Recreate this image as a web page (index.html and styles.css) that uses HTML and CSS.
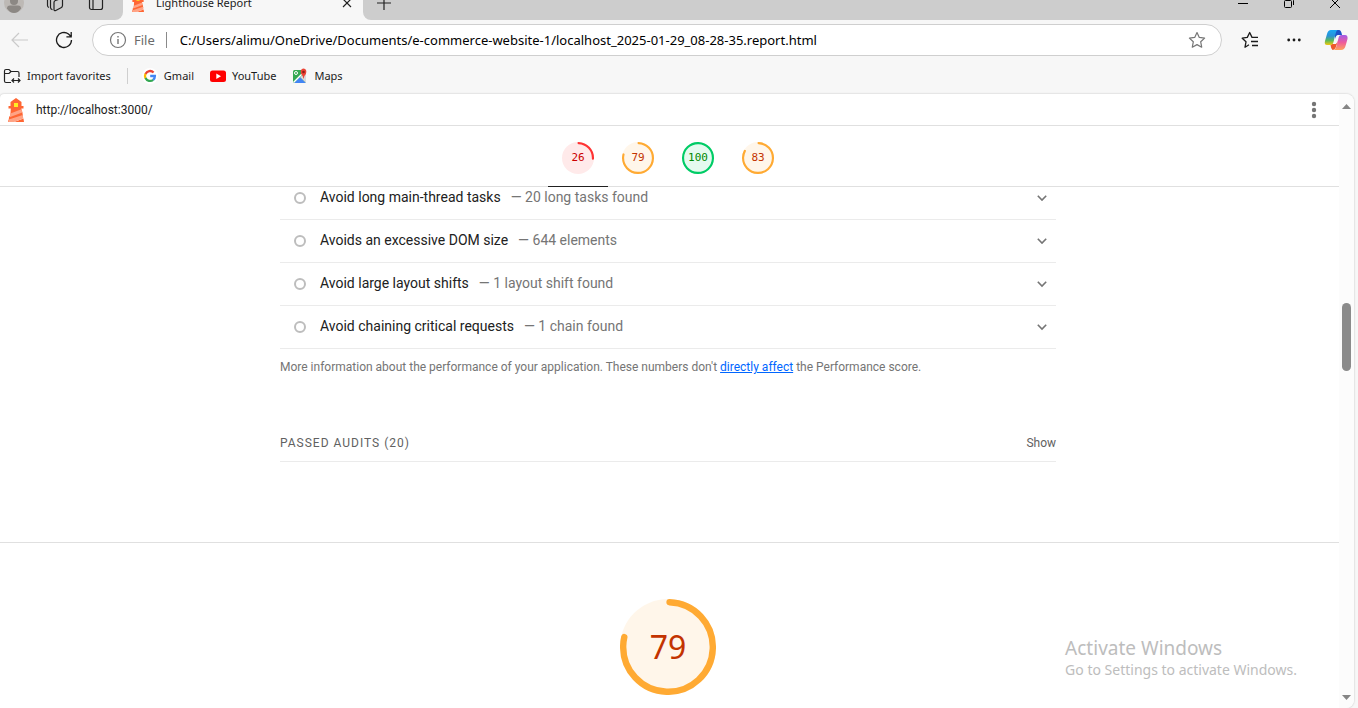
FILE: index.html
```html
<!DOCTYPE html>
<html lang="en">
<head>
<meta charset="utf-8">
<title>Lighthouse Report</title>
<link rel="stylesheet" href="styles.css">
</head>
<body>
<svg class="defs" width="0" height="0" aria-hidden="true">
  <defs>
    <symbol id="lighthouse" viewBox="0 0 16 24">
      <path fill="#ff6633" d="M8 0 13.500 4V8H15.500V10.500H13.300L13.800 13 2.300 18 2.800 10.500H.500V8H2.500V4ZM1.200 18.500 14.300 13.500 15 18.500 .5 23ZM6 24 15.500 20.500 16 24ZM0 24 .3 22 2 24Z"/>
      <path fill="#ffa385" d="M2.400 15.500 13.400 11.200 14.200 14.500 1.600 19.200ZM.8 21.500 14.800 17 15.300 20.500 6 24H.2Z"/>
      <path fill="#ffee22" d="M6 5H10V9H6Z"/>
    </symbol>
    <symbol id="chevron" viewBox="0 0 12 12">
      <path d="M1.800 3.800 6 8 10.200 3.800" fill="none" stroke="#757575" stroke-width="1.600"/>
    </symbol>
    <linearGradient id="cp1" x1="0" y1="0" x2="0" y2="1"><stop offset="0" stop-color="#1aa7f2"/><stop offset=".4" stop-color="#2b92d6"/><stop offset=".7" stop-color="#5cb95a"/><stop offset="1" stop-color="#f3c80c"/></linearGradient>
    <linearGradient id="cp2" x1="0" y1="0" x2="0" y2="1"><stop offset="0" stop-color="#a25be8"/><stop offset=".5" stop-color="#ee5c9c"/><stop offset="1" stop-color="#ffa35c"/></linearGradient>
  </defs>
</svg>
<div class="window">
  <header class="tabstrip">
    <div class="strip-left">
      <button class="icon-btn" aria-label="Profile"><svg width="20" height="20" viewBox="0 0 20 20"><circle cx="10" cy="10" r="10" fill="#bdb9b5"/><circle cx="10" cy="8" r="4" fill="#8c8884"/><path d="M3 15.500Q3 12.500 6 12.500H14Q17 12.500 17 15.500 14 20 10 20T3 15.500" fill="#8c8884"/></svg></button>
      <button class="icon-btn" aria-label="Workspaces"><svg width="18" height="18" viewBox="0 0 18 18" fill="none" stroke="#222" stroke-width="1.200"><path d="M1.500 3V11.500Q1.500 13 3 13.500M4.500 4V13.500Q4.500 15 6.500 15.800"/><path d="M8 8.500Q8 7 9.500 6.500L15 4.500Q16.500 4 16.500 5.500V11.500Q16.500 13 15 13.800L9.800 16.500Q8 17.200 8 15.500Z"/></svg></button>
      <button class="icon-btn" aria-label="Tab actions"><svg width="16" height="16" viewBox="0 0 16 16" fill="none" stroke="#222" stroke-width="1.200"><rect x="1.500" y="1.500" width="13" height="13" rx="2"/><path d="M5 2V14"/></svg></button>
    </div>
    <div class="tab">
      <svg class="tab-icon" width="12" height="18"><use href="#lighthouse"/></svg>
      <span class="tab-title">Lighthouse Report</span>
      <button class="icon-btn" aria-label="Close tab"><svg width="10" height="10" viewBox="0 0 10 10" stroke="#222" stroke-width="1.200"><path d="M1 1 9 9M9 1 1 9"/></svg></button>
    </div>
    <div class="strip-right">
      <button class="icon-btn" aria-label="New tab"><svg width="14" height="14" viewBox="0 0 14 14" stroke="#222" stroke-width="1.200"><path d="M0 7H14M7 0V14"/></svg></button>
      <div class="win-controls">
        <button class="icon-btn" aria-label="Minimize"><svg width="10" height="10" viewBox="0 0 10 10" stroke="#000"><path d="M0 5.500H10"/></svg></button>
        <button class="icon-btn" aria-label="Restore"><svg width="10" height="10" viewBox="0 0 10 10" fill="none" stroke="#000"><rect x=".5" y="2.500" width="7" height="7" rx="1"/><path d="M3 .5H7.500Q9.500 .5 9.500 2.500V7"/></svg></button>
        <button class="icon-btn" aria-label="Close"><svg width="10" height="10" viewBox="0 0 10 10" stroke="#000"><path d="M0 0 10 10M10 0 0 10"/></svg></button>
      </div>
    </div>
  </header>

  <div class="toolbar">
    <button class="icon-btn" aria-label="Back"><svg width="18" height="16" viewBox="0 0 18 16" fill="none" stroke="#cacaca" stroke-width="1.200"><path d="M17 8H1M8 1 1 8 8 15"/></svg></button>
    <button class="icon-btn" aria-label="Refresh"><svg width="18" height="18" viewBox="0 0 18 18" fill="none" stroke="#1b1b1b" stroke-width="1.300"><path d="M16.500 9A7.500 7.500 0 1 1 13.500 3L16 5.500M16.200 1V5.800H11.400"/></svg></button>
    <div class="address">
      <svg width="18" height="18" viewBox="0 0 18 18" fill="none" stroke="#767676"><circle cx="9" cy="9" r="7.500" stroke-width="1.200"/><path d="M9 8V13" stroke-width="1.400"/><path d="M9 5V6.500" stroke-width="1.400"/></svg>
      <span class="scheme">File</span>
      <input class="url" type="text" aria-label="Address" value="C:/Users/alimu/OneDrive/Documents/e-commerce-website-1/localhost_2025-01-29_08-28-35.report.html">
      <button class="icon-btn" aria-label="Add to favorites"><svg width="18" height="18" viewBox="0 0 18 18" fill="none" stroke="#767676" stroke-width="1.200" stroke-linejoin="round"><path d="M9 1.500 11.300 6.400 16.600 7.100 12.700 10.800 13.700 16.200 9 13.600 4.300 16.200 5.300 10.800 1.400 7.100 6.700 6.400Z"/></svg></button>
    </div>
    <div class="tools">
      <button class="icon-btn" aria-label="Favorites"><svg width="18" height="18" viewBox="0 0 18 18" fill="none" stroke="#1b1b1b" stroke-width="1.300" stroke-linejoin="round"><path d="M8 13.800 4 16.200 5 10.800 1.200 7.200 6.300 6.400 8.700 1.500 11 6.400H17M10 10.500H17M11 14.500H17"/></svg></button>
      <button class="icon-btn" aria-label="Settings and more"><svg width="14" height="4" viewBox="0 0 14 4" fill="#1b1b1b"><circle cx="1.700" cy="2" r="1.400"/><circle cx="7" cy="2" r="1.400"/><circle cx="12.300" cy="2" r="1.400"/></svg></button>
      <button class="icon-btn" aria-label="Copilot"><svg width="24" height="22" viewBox="0 0 24 22"><path d="M11 1H15Q17 1 17.800 5L18 6H14Q12 6 11 10Z" fill="#1c54c8"/><path d="M8 15H12L14 12 11.500 19Q10.500 21 8.500 21 7 20 6.500 16Z" fill="#ed5a2c"/><path d="M7 1H13.500Q12 2 11.500 5L9.500 13Q9 16 6 16H3Q0 16 1 12L3 5Q4 1 7 1Z" fill="url(#cp1)"/><path d="M17.500 6H21Q24 6 23.500 10L21.500 17Q20.500 21 17 21H10Q11.500 20 12.500 17L14.500 9Q15 6 17.500 6Z" fill="url(#cp2)"/></svg></button>
    </div>
  </div>

  <nav class="favbar" aria-label="Favorites bar">
    <a href="#import"><svg width="18" height="16" viewBox="0 0 18 16" fill="none" stroke="#222" stroke-width="1.200"><path d="M8 14.500H3Q1.500 14.500 1.500 13V3Q1.500 1.500 3 1.500H6L8 3.500H14.500Q16 3.500 16 5V9M1.500 5.500H6L8 3.500M9 12.500H17M11 10.500 9 12.500 11 14.500M15 10.500 17 12.500 15 14.500"/></svg>Import favorites</a>
    <a class="divided" href="#gmail"><svg width="16" height="16" viewBox="0 0 16 16"><circle cx="8" cy="8" r="8" fill="#fff"/><g fill="none" stroke-width="2.300"><path stroke="#ea4335" d="M3.500 6A5 5 0 0 1 11.600 4.500"/><path stroke="#fbbc05" d="M3.500 5.800A5 5 0 0 0 3.500 10.200"/><path stroke="#34a853" d="M3.500 10A5 5 0 0 0 11.200 11.800"/><path stroke="#4285f4" d="M8.200 8H12.900A5 5 0 0 1 11.200 11.800"/></g></svg>Gmail</a>
    <a href="#youtube"><svg width="16" height="16" viewBox="0 0 16 16"><rect y="2.500" width="16" height="11.500" rx="2.500" fill="#f00"/><path d="M6.300 5.500V11L11 8.200Z" fill="#fff"/></svg>YouTube</a>
    <a href="#maps"><svg width="16" height="16" viewBox="0 0 16 16"><rect x="1" y="2" width="13" height="13" rx="1.500" fill="#34a853"/><path d="M2 15 8 9 14 15Z" fill="#4285f4"/><path d="M1.500 14.500 13.500 2.500" stroke="#fff" stroke-width="1.500"/><path d="M8 9 14 15V5Z" fill="#dadada"/><circle cx="4" cy="5" r="1.500" fill="none" stroke="#fff"/><path d="M11.500 11Q11.300 8 9.200 6 7.600 1 11.500.5 15.500 1 13.900 6 11.700 8 11.500 11" fill="#ea4335"/><circle cx="11.500" cy="4" r="1.300" fill="#8c1f16"/></svg>Maps</a>
  </nav>

  <div class="page">
    <div class="report">
      <div class="topbar">
        <svg width="16" height="24"><use href="#lighthouse"/></svg>
        <a class="site" href="#site">http://localhost:3000/</a>
        <button class="icon-btn" aria-label="Report options"><svg width="6" height="18" viewBox="0 0 6 18" fill="#757575"><circle cx="3" cy="3" r="2.200"/><circle cx="3" cy="9" r="2.200"/><circle cx="3" cy="15" r="2.200"/></svg></button>
      </div>
      <nav class="scores" aria-label="Scores">
        <a class="score fail current" href="#performance"><svg viewBox="0 0 120 120"><circle class="base" cx="60" cy="60" r="60"/><circle class="arc" cx="60" cy="60" r="56" pathLength="100" stroke-dasharray="25 100"/></svg><span>26</span></a>
        <a class="score average" href="#accessibility"><svg viewBox="0 0 120 120"><circle class="base" cx="60" cy="60" r="60"/><circle class="arc" cx="60" cy="60" r="56" pathLength="100" stroke-dasharray="78 100"/></svg><span>79</span></a>
        <a class="score pass" href="#practices"><svg viewBox="0 0 120 120"><circle class="base" cx="60" cy="60" r="60"/><circle class="arc" cx="60" cy="60" r="56"/></svg><span>100</span></a>
        <a class="score average" href="#seo"><svg viewBox="0 0 120 120"><circle class="base" cx="60" cy="60" r="60"/><circle class="arc" cx="60" cy="60" r="56" pathLength="100" stroke-dasharray="82 100"/></svg><span>83</span></a>
      </nav>
      <main class="body">
        <section class="category">
          <ul class="audits">
            <li><button class="audit"><i class="dot"></i><span>Avoid long main-thread tasks</span><span class="value">— 20 long tasks found</span><svg width="12" height="12"><use href="#chevron"/></svg></button></li>
            <li><button class="audit"><i class="dot"></i><span>Avoids an excessive DOM size</span><span class="value">— 644 elements</span><svg width="12" height="12"><use href="#chevron"/></svg></button></li>
            <li><button class="audit"><i class="dot"></i><span>Avoid large layout shifts</span><span class="value">— 1 layout shift found</span><svg width="12" height="12"><use href="#chevron"/></svg></button></li>
            <li><button class="audit"><i class="dot"></i><span>Avoid chaining critical requests</span><span class="value">— 1 chain found</span><svg width="12" height="12"><use href="#chevron"/></svg></button></li>
          </ul>
          <p class="note">More information about the performance of your application. These numbers don't <a href="#affect">directly affect</a> the Performance score.</p>
          <button class="clump"><span class="clump-title">Passed audits (20)</span><span class="show">Show</span></button>
        </section>
        <section class="next" id="accessibility">
          <a class="score average large" href="#accessibility"><svg viewBox="0 0 120 120"><circle class="base" cx="60" cy="60" r="60"/><circle class="arc" cx="60" cy="60" r="56" pathLength="100" stroke-dasharray="78 100"/></svg><span>79</span></a>
        </section>
      </main>
    </div>
    <div class="scrollbar" aria-hidden="true">
      <svg width="9" height="5" viewBox="0 0 9 5"><path d="M0 5 4.500 0 9 5Z" fill="#858585"/></svg>
      <div class="track"><i class="before"></i><i class="thumb"></i><i class="after"></i></div>
      <svg width="9" height="5" viewBox="0 0 9 5"><path d="M0 0 4.500 5 9 0Z" fill="#858585"/></svg>
    </div>
  </div>
  <aside class="watermark"><p class="wm-title">Activate Windows</p><p>Go to Settings to activate Windows.</p></aside>
</div>
</body>
</html>
```
FILE: styles.css
```css
* { box-sizing: border-box; }
body {
  margin: 0;
  font: 11px/16px "Noto Sans", "Open Sans", sans-serif;
  color: #1b1b1b;
}
.defs { position: absolute; }
svg { display: block; flex: none; }
p, ul { margin: 0; padding: 0; }
a { color: inherit; text-decoration: none; }
button { border: 0; padding: 0; background: none; font: inherit; color: inherit; }
.window {
  display: flex;
  flex-direction: column;
  height: 100vh;
  overflow: hidden;
  background: #f7f7f7;
}
.icon-btn { display: flex; align-items: center; justify-content: center; flex: none; }

/* Tab strip */
.tabstrip { display: flex; flex: none; height: 34px; margin-top: -14px; }
.strip-left, .strip-right { display: flex; align-items: center; background: #cdcdcd; }
.strip-left { width: 123px; gap: 22px; padding-left: 4px; border-bottom-right-radius: 8px; }
.strip-left .icon-btn + .icon-btn + .icon-btn { margin-left: 2px; }
.tab { display: flex; align-items: center; width: 240px; padding: 0 11px 0 9px; }
.tab-title { flex: 1; padding-left: 12px; }
.strip-right { flex: 1; justify-content: space-between; padding: 0 18px 0 14px; border-bottom-left-radius: 8px; }
.win-controls { display: flex; gap: 36px; }

/* Toolbar */
.toolbar { display: flex; align-items: center; flex: none; height: 40px; padding: 0 10px 0 11px; }
.toolbar > .icon-btn + .icon-btn { margin: 0 19px 0 26px; }
.address {
  display: flex;
  align-items: center;
  flex: 1;
  height: 32px;
  padding: 0 15px 0 16px;
  border: 1px solid #cfcfcf;
  border-radius: 16px;
  background: #fff;
  font-size: 13px;
}
.scheme { margin-left: 7px; padding-right: 11px; border-right: 1px solid #8a8a8a; color: #6b6b6b; }
.url { flex: 1; min-width: 0; margin-left: 13px; padding: 0; border: 0; outline: 0; font: inherit; color: #000; background: none; }
.tools { display: flex; align-items: center; gap: 28px; margin-left: 19px; }
.tools .icon-btn + .icon-btn + .icon-btn { margin-left: -5px; }

/* Favorites bar */
.favbar { display: flex; align-items: center; flex: none; height: 34px; padding: 0 0 2px 3px; gap: 16px; }
.favbar a { display: flex; align-items: center; gap: 6px; }
.favbar .divided { padding-left: 14px; border-left: 1px solid #cfcfcf; }

/* Page viewport */
.page {
  display: flex;
  flex: 1;
  min-height: 0;
  margin-right: 4px;
  overflow: hidden;
  background: #fff;
  border-radius: 4px 8px 8px 0;
  box-shadow: 0 0 2px #b8b8b8;
}
.report { display: flex; flex: 1; flex-direction: column; font-family: Roboto, sans-serif; font-size: 12px; color: #212121; }
.topbar { display: flex; align-items: center; flex: none; height: 32px; padding: 0 22px 0 8px; gap: 12px; border-bottom: 1px solid #e0e0e0; }
.site { flex: 1; }
.scores { display: flex; justify-content: center; flex: none; height: 61px; padding-right: 3px; border-bottom: 1px solid #e0e0e0; }
.score { display: grid; place-items: center; width: 60px; margin-bottom: -1px; padding-top: 4px; border-bottom: 1px solid transparent; font: 11px/16px "DejaVu Sans Mono", monospace; }
.score > * { grid-area: 1 / 1; }
.score svg { width: 32px; height: 32px; }
.score .base { fill: currentColor; opacity: .1; }
.score .arc { fill: none; stroke: currentColor; stroke-width: 8; stroke-linecap: round; transform: rotate(-88deg); transform-origin: center; }
.current { border-bottom-color: #212121; }
.fail { color: #f33; }
.fail span { color: #c00; }
.average { color: #fa3; }
.average span { color: #c33300; }
.pass { color: #0c6; }
.pass span { color: #080; }

.body { flex: 1; min-height: 0; overflow: hidden; }
.category { max-width: 779px; margin: 0 auto; padding: 0 3px 80px 0; }
.audits { margin-top: -10px; list-style: none; font-size: 14px; }
.audits li { border-bottom: 1px solid #ebebeb; }
.audit { display: flex; align-items: center; width: 100%; height: 42px; padding: 0 8px 0 14px; text-align: left; }
.audit span { padding-bottom: 2px; }
.dot { width: 12px; height: 12px; margin-right: 14px; border: 2px solid #bdbdbd; border-radius: 50%; }
.audit .value { flex: 1; margin-left: 10px; color: #757575; }
.note { padding: 10px 0 58px; color: #757575; }
.note a { color: #06f; text-decoration: underline; }
.clump { display: flex; justify-content: space-between; width: 100%; padding: 2px 0 10px; border-bottom: 1px solid #ebebeb; color: #616161; }
.clump-title { text-transform: uppercase; letter-spacing: 1px; }
.next { display: flex; justify-content: center; padding: 56px 3px 0 0; border-top: 1px solid #e0e0e0; }
.large { width: 96px; height: 97px; padding: 0; font: 32px/40px "Noto Sans", sans-serif; }
.large svg { width: 96px; height: 96px; }

.scrollbar { display: flex; flex-direction: column; align-items: center; flex: none; width: 15px; padding: 10px 0 8px; background: #fcfcfc; }
.track { display: flex; flex: 1; flex-direction: column; width: 9px; }
.before { flex: 194; }
.thumb { flex: 68; border-radius: 5px; background: #8b8b8b; }
.after { flex: 324; }

.watermark { position: absolute; right: 61px; bottom: 28px; color: #bdbdbd; font-size: 14px; line-height: 20px; }
.wm-title { font-size: 19px; line-height: 24px; }
```
